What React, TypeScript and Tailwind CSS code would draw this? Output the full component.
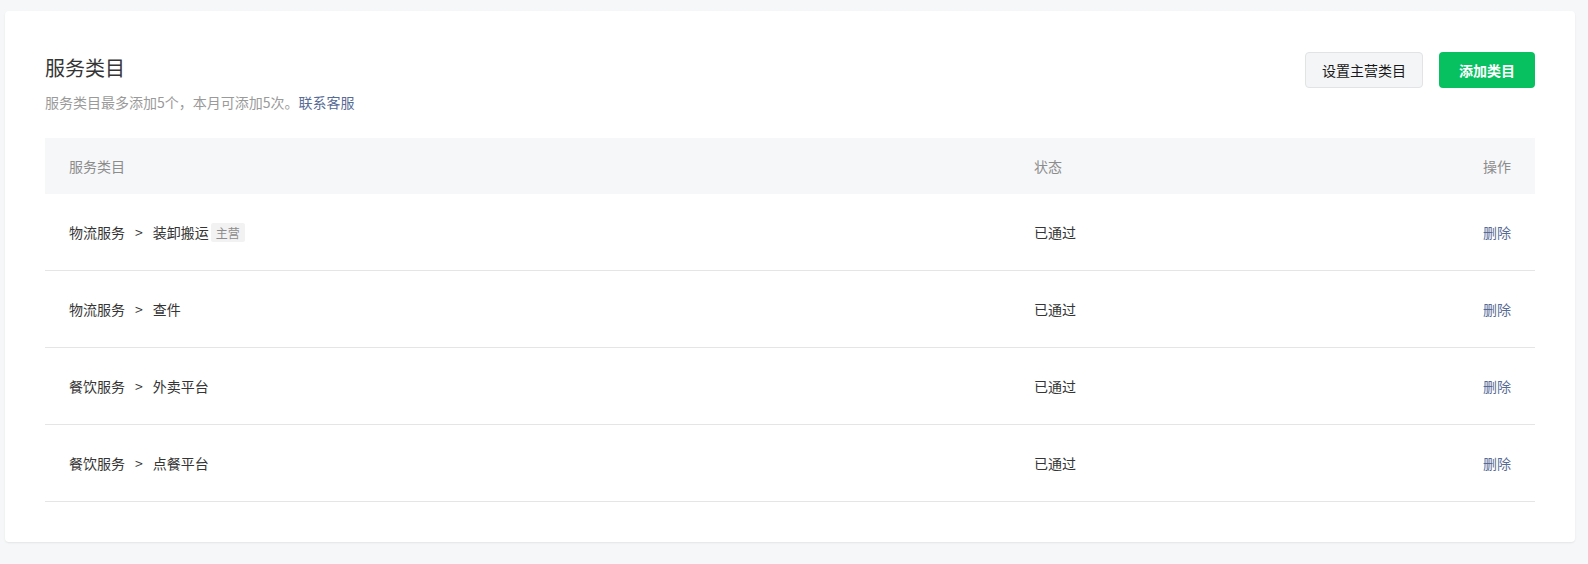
import React from 'react';

const rows = [
  { parent: '物流服务', child: '装卸搬运', main: true, status: '已通过' },
  { parent: '物流服务', child: '查件', main: false, status: '已通过' },
  { parent: '餐饮服务', child: '外卖平台', main: false, status: '已通过' },
  { parent: '餐饮服务', child: '点餐平台', main: false, status: '已通过' },
];

export default function App() {
  return (
    <div
      className="min-h-[564px] bg-[#f6f7f9] pt-[11px] pl-[5px]"
      style={{ fontFamily: '"Noto Sans CJK SC", "Noto Sans", sans-serif' }}
    >
      <div className="w-[1570px] bg-white rounded-[4px] shadow-[0_1px_2px_rgba(0,0,0,0.08)] px-[40px] pt-[41px] pb-[40px]">
        {/* Header */}
        <div className="flex justify-between items-start">
          <div>
            <h1 className="text-[20px] leading-[32px] text-[#353535] font-normal">服务类目</h1>
            <p className="mt-[8px] text-[14px] leading-[20px] text-[#9a9a9a]">
              服务类目最多添加5个，本月可添加5次。
              <a href="#" className="text-[#576b95]">联系客服</a>
            </p>
          </div>
          <div className="flex gap-[16px]">
            <button className="w-[118px] h-[36px] rounded-[4px] border border-[#e2e3e5] bg-[#f4f5f7] text-[14px] text-[#191919]">
              设置主营类目
            </button>
            <button className="w-[96px] h-[36px] rounded-[4px] bg-[#07c160] text-[14px] font-bold text-white">
              添加类目
            </button>
          </div>
        </div>

        {/* Table */}
        <div className="mt-[26px] text-[14px]">
          <div className="flex items-center h-[56px] bg-[#f6f7f9] px-[24px] text-[#8c8c8c]">
            <div className="w-[965px]">服务类目</div>
            <div className="flex-1">状态</div>
            <div>操作</div>
          </div>
          {rows.map((r, i) => (
            <div
              key={i}
              className="flex items-center h-[77px] border-b border-[#e5e5e5] px-[24px] text-[#353535]"
            >
              <div className="w-[965px] flex items-center">
                <span>{r.parent}</span>
                <span className="mx-[10px]">&gt;</span>
                <span>{r.child}</span>
                {r.main && (
                  <span className="ml-[2px] px-[5px] h-[19px] leading-[19px] text-[12px] rounded-[2px] bg-[#f2f2f2] text-[#8c8c8c]">
                    主营
                  </span>
                )}
              </div>
              <div className="flex-1">{r.status}</div>
              <a href="#" className="text-[#576b95]">删除</a>
            </div>
          ))}
        </div>
      </div>
    </div>
  );
}
